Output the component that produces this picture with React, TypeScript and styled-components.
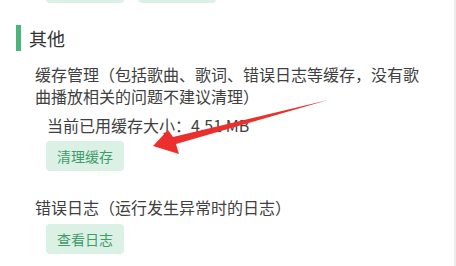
import React from 'react';
import styled, { createGlobalStyle } from 'styled-components';

const GlobalStyle = createGlobalStyle`
    html, body {
        margin: 0;
        padding: 0;
        background: #ffffff;
    }
    body {
        font-family: "Noto Sans CJK SC", "Noto Sans", sans-serif;
        color: #333333;
    }
`;

const Page = styled.div`
    position: relative;
    width: 454px;
    height: 266px;
    overflow: hidden;
    border-right: 2px solid #ececec;
`;

const ButtonRow = styled.div<{ $offset?: number }>`
    display: flex;
    gap: 14px;
    padding-left: 46px;
    margin-top: ${(p) => p.$offset ?? 0}px;
`;

const Btn = styled.button`
    height: 30px;
    min-width: 78px;
    padding: 0 11px;
    border: none;
    border-radius: 4px;
    background: #dcf1e5;
    color: #3f9b69;
    font-family: inherit;
    font-size: 14px;
    line-height: 30px;
    cursor: pointer;
`;

const SectionTitle = styled.h3`
    display: flex;
    align-items: center;
    gap: 8px;
    margin: 22px 0 0 16px;
    height: 26px;
    font-size: 18px;
    font-weight: 400;
    color: #333333;

    &::before {
        content: '';
        width: 5px;
        height: 26px;
        background: #4cb47a;
    }
`;

const Item = styled.div<{ $top: number }>`
    padding: 0 27px 0 35px;
    margin-top: ${(p) => p.$top}px;
`;

const Desc = styled.p`
    margin: 0;
    font-size: 16px;
    line-height: 22px;
    color: #404040;
`;

const SubLine = styled.p`
    margin: 7px 0 0 12px;
    font-size: 16px;
    line-height: 22px;
    color: #404040;
`;

const ItemButtons = styled(ButtonRow)`
    padding-left: 11px;
`;

const Arrow = styled.svg`
    position: absolute;
    left: 0;
    top: 0;
    pointer-events: none;
`;

function App() {
    return (
        <>
            <GlobalStyle />
            <Page>
                {/* bottoms of the previous section's buttons, scrolled out of view */}
                <ButtonRow $offset={-27}>
                    <Btn aria-label="上一项" />
                    <Btn aria-label="下一项" />
                </ButtonRow>

                <SectionTitle>其他</SectionTitle>

                <Item $top={12}>
                    <Desc>缓存管理（包括歌曲、歌词、错误日志等缓存，没有歌曲播放相关的问题不建议清理）</Desc>
                    <SubLine>当前已用缓存大小：4.51 MB</SubLine>
                    <ItemButtons $offset={5}>
                        <Btn>清理缓存</Btn>
                    </ItemButtons>
                </Item>

                <Item $top={25}>
                    <Desc>错误日志（运行发生异常时的日志）</Desc>
                    <ItemButtons $offset={6}>
                        <Btn>查看日志</Btn>
                    </ItemButtons>
                </Item>

                <Arrow width="456" height="266" viewBox="0 0 456 266">
                    <polygon
                        points="153,146 168,130 173,137 328,100 176,144 179,154"
                        fill="#ec2f2c"
                    />
                </Arrow>
            </Page>
        </>
    );
}

export default App;
